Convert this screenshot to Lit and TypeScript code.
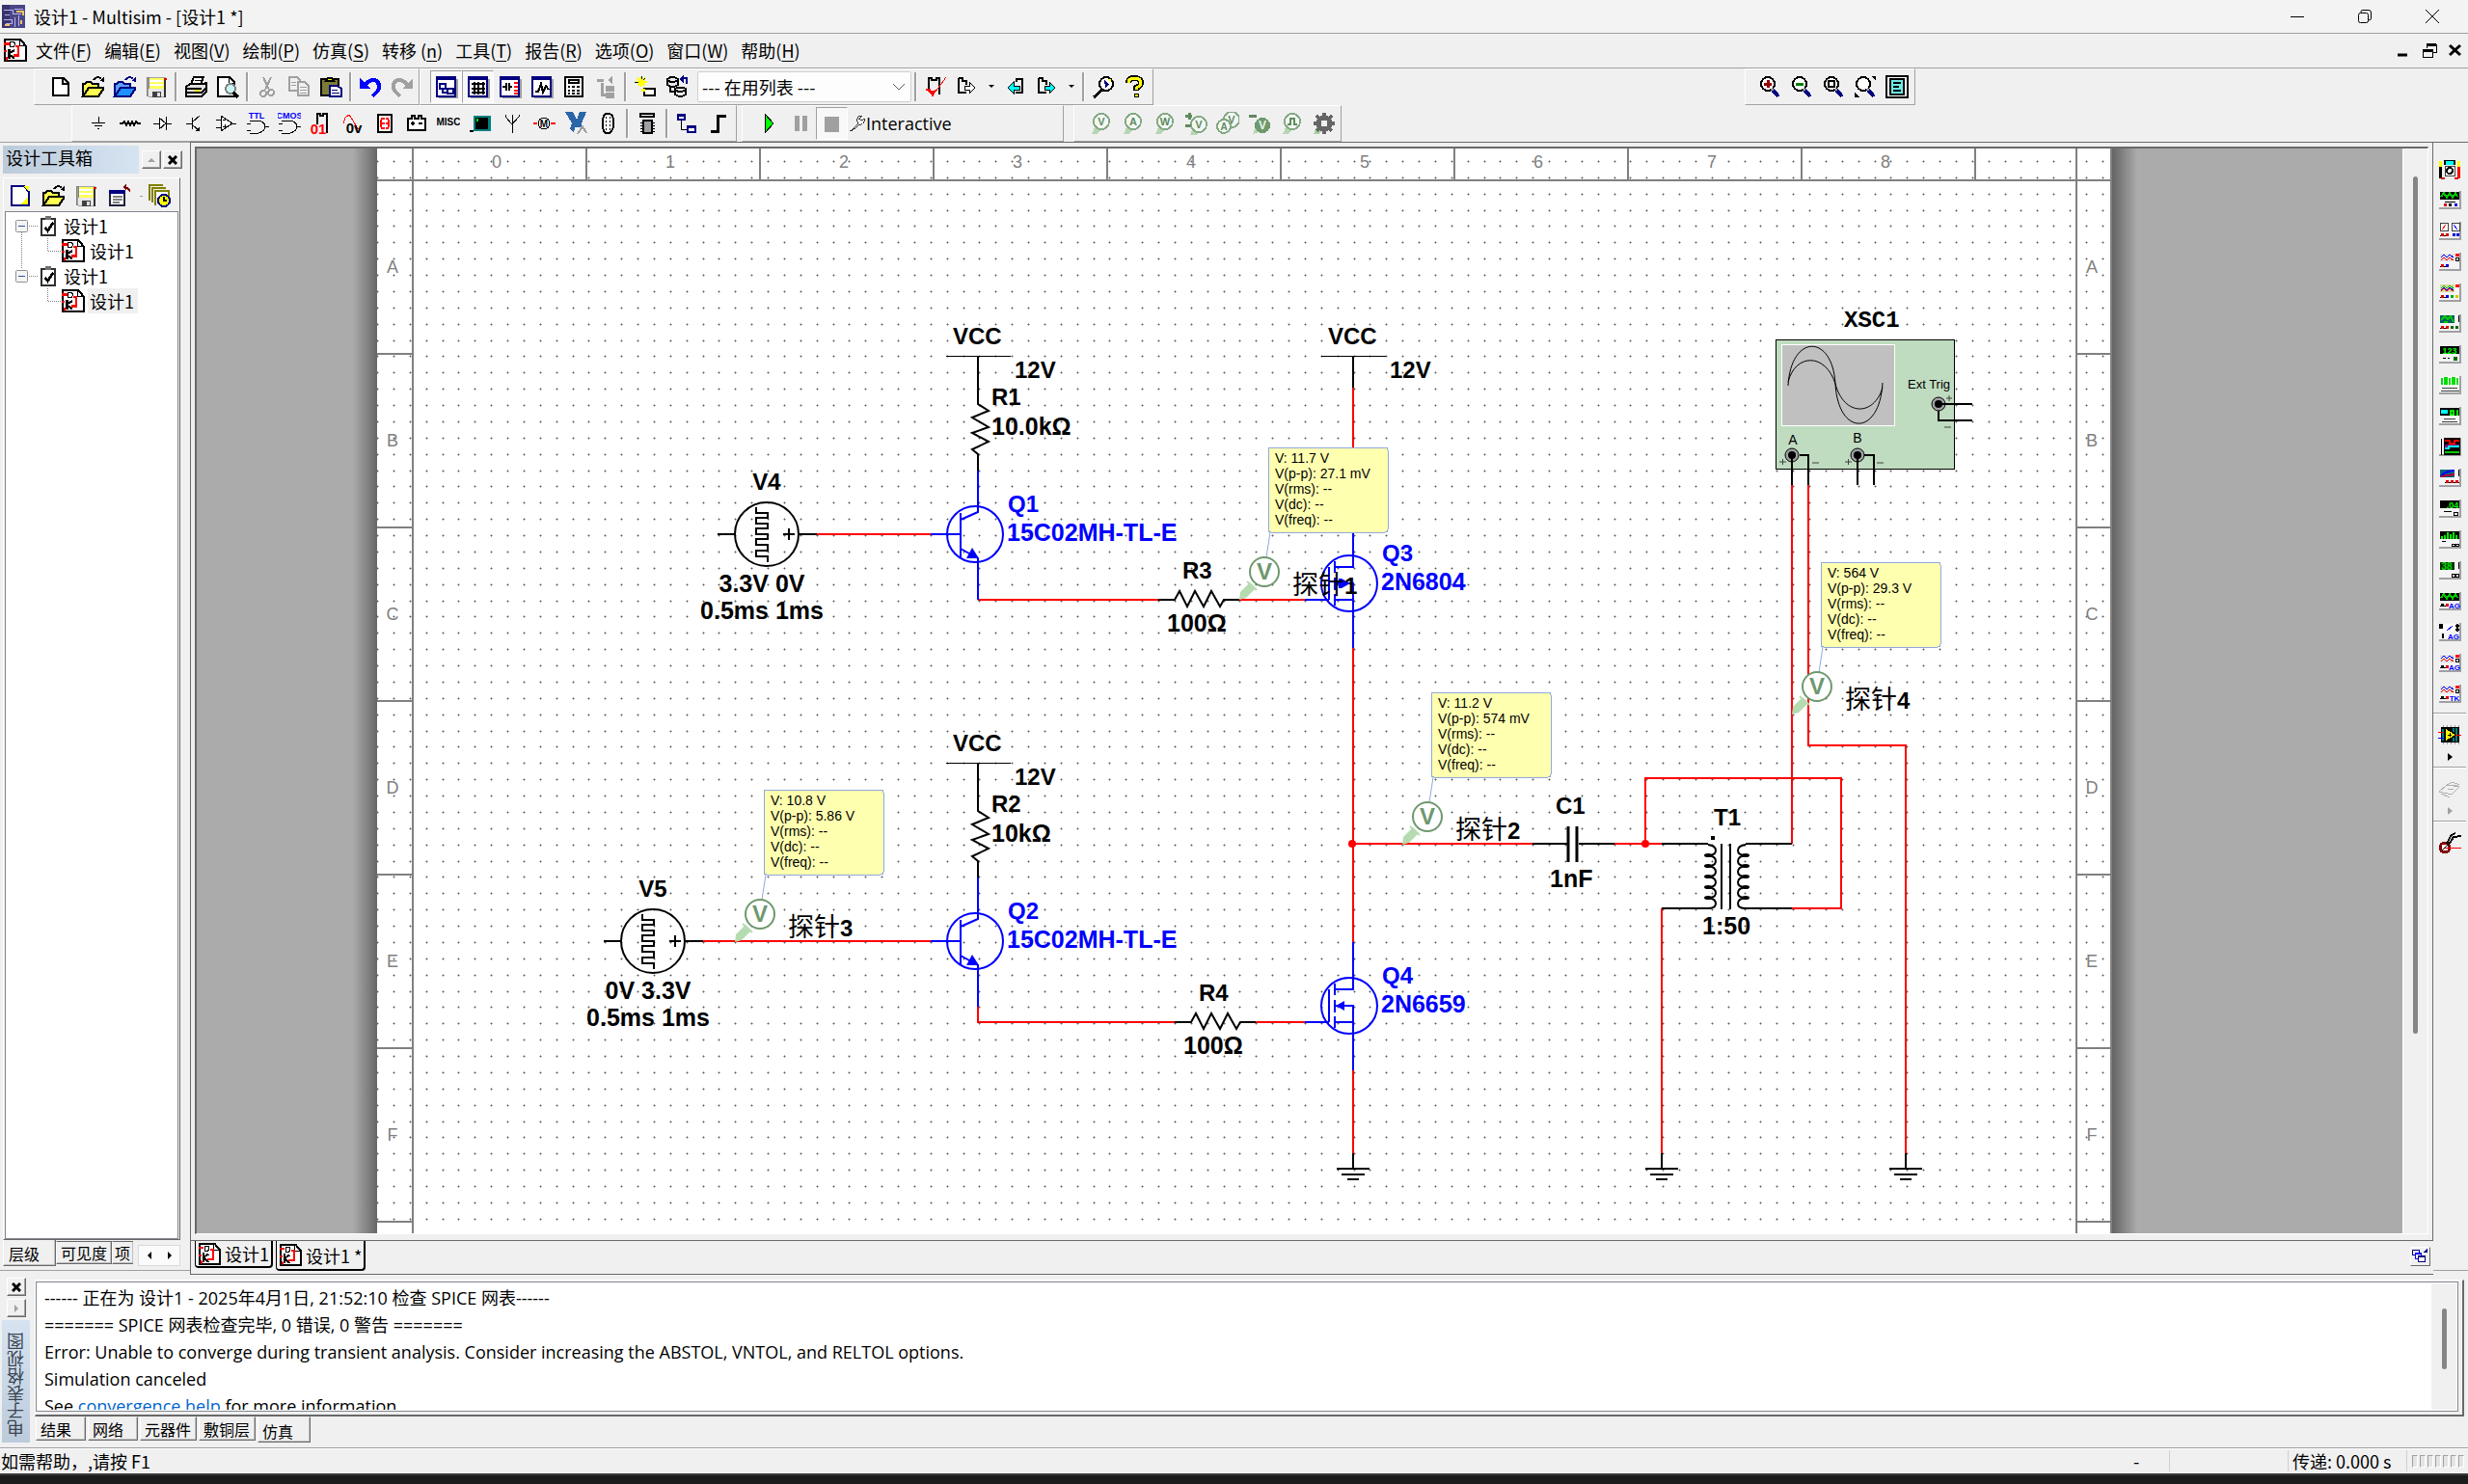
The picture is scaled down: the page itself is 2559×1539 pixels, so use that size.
import { LitElement, html, svg, css, nothing } from "lit";
import type { TemplateResult } from "lit";
import { customElement, property, state } from "lit/decorators.js";
import { classMap } from "lit/directives/class-map.js";

const NAVY = "#000080";
const s = (d: string, stroke = "#000", w = 2, fill = "none") =>
  svg`<path d=${d} stroke=${stroke} stroke-width=${w} fill=${fill}></path>`;
const f = (d: string, fill = "#000") => svg`<path d=${d} fill=${fill}></path>`;
const t = (x: number, y: number, str: string, fill = "#000", size = 10) =>
  svg`<text x=${x} y=${y} fill=${fill} font-size=${size} font-weight="700" text-anchor="middle" font-family="Liberation Sans, sans-serif">${str}</text>`;

/* magnifier lens shared by the zoom commands */
const lens = (inner: unknown) => svg`
  <circle cx="10" cy="9" r="7" fill="#fff" stroke="#000" stroke-width="2"></circle>
  ${s("M15 15L21 22", NAVY, 4)}${s("M14 14L16 16", "#a0a0a4", 2)}${inner}`;

/* probe badge shared by the probe commands */
const probe = (ch: string, x = 13, y = 10) => svg`
  ${f(`M${x - 10} ${y + 13}L${x - 6} ${y + 4}L${x} ${y + 8}L${x - 4} ${y + 13}Z`, "#b5d6b0")}
  <circle cx=${x} cy=${y} r="8" fill="#f4f8f4" stroke="#84a984" stroke-width="2"></circle>
  ${t(x, y + 4, ch, "#5f8a5f", 11)}`;

const windowIcon = (inner: unknown) => svg`
  ${f("M4 4H24V24H4Z", "#a0a0a4")}${s("M2 2H21V22H2Z", NAVY, 2, "#fff")}${f("M1 1H22V5H1Z", NAVY)}${inner}`;

const floppy = svg`${f("M2 2H22V23H4L2 21Z", "#a0a0a4")}${f("M4 3H20V14H4Z", "#ffff60")}${s("M2 2H4V21H2Z", "#808080", 1)}
  ${f("M20 3H22V23H20Z", "#303030")}${f("M4 14H20V22H4Z", "#e8e8e8")}${f("M8 17H17V23H8Z", "#404040")}${f("M13 18H16V22H13Z", "#e0e0e0")}${f("M20 3H23V5H20Z", "#d00")}
  ${s("M5 6H19M5 10H19", "#fff", 2)}`;
const folder = (a: string, b: string, line: string, arrow: string) => svg`
  ${s("M2 22V9H4L6 7H10L12 9H18V13", line, 2, a)}${s("M2 22L8 13H24L18 22Z", line, 2, b)}
  ${s("M13 5Q17 0 21 4", arrow, 2)}${f("M19 6L24 7V1Z", arrow)}`;

const ICONS: Record<string, unknown> = {
  app: svg`${f("M0 0H24V24H0Z", "#4a4688")}${f("M0 0H8V24H0Z", "#37346e")}${s("M2 5H11V9H20M3 10H8M2 15H10V19H4M13 13V23M17 11V22M13 4H22", "#b9b6e6", 1)}${s("M15 7H22V11M3 21H8M20 16V20", "#f0c26a", 2)}`,
  doc: svg`${s("M2 2H17L22 8V22H2Z", "#000", 2, "#fff")}${s("M16 2V8H22", "#000", 1)}${s("M1 6H6M1 13H4M12 8H15V17H10", "#f00", 2)}
    ${s("M7 4H10Q13 6 10 9H7Z", "#000", 1)}${s("M6 11V20M6 15L11 12M6 16L11 20", "#000", 2)}${f("M3 18L6 20L3 22Z", "#f00")}`,
  new: s("M4 3H15L20 8V21H4ZM14 3V9H20", "#000", 2, "#fff"),
  newDoc: svg`${s("M3 2H16L21 8V22H3Z", NAVY, 2, "#fff")}${f("M15 2L21 8V2H17Z", "#ff0")}${f("M20 14V21H12Z", "#ff0")}`,
  open: folder("#ffff50", "#ffff50", "#000", "#000"),
  openBlue: folder("#5aa0ff", "#1e90ff", NAVY, NAVY),
  save: floppy,
  print: svg`${s("M7 9L10 2H20L17 9", "#000", 2, "#fff")}${s("M11 5H17M10 8H15", "#000", 1)}${s("M2 12L6 9H20L23 8V17L18 22H2Z", "#000", 2, "#e0e0e0")}${s("M2 14H18M2 18H18L23 13", "#000", 2)}${f("M11 15H16V17H11Z", "#ff0")}`,
  preview: svg`${s("M2 2H14L19 7V22H2Z", "#000", 2, "#fff")}${s("M13 2V8H19", "#000", 1)}<circle cx="15" cy="14" r="5" fill="#c8f4f4" stroke="#808080" stroke-width="2"></circle>${s("M18 18L23 23", "#000", 3)}`,
  cut: svg`${s("M8 2L14 15M16 2L10 15", "#a0a0a0", 2)}<circle cx="8" cy="19" r="3" fill="none" stroke="#a0a0a0" stroke-width="2"></circle><circle cx="16" cy="18" r="3" fill="none" stroke="#a0a0a0" stroke-width="2"></circle>`,
  copy: svg`${s("M2 2H10L13 5V16H2Z", "#a0a0a0", 2)}${s("M4 7H9M4 10H9", "#a0a0a0", 1)}${s("M11 7H18L22 11V21H11Z", "#a0a0a0", 2, "#f0f0f0")}${s("M13 12H20M13 15H20M13 18H20", "#a0a0a0", 1)}`,
  paste: svg`${s("M2 4H20V21H2Z", "#000", 2, "#7b7b36")}${s("M7 6H15L13 3H9Z", "#000", 2, "#ff0")}${s("M11 11H19L23 14V22H11Z", NAVY, 2, "#fff")}${s("M13 15H19M13 18H21", NAVY, 1)}`,
  undo: svg`${s("M5 12Q10 4 17 5Q23 8 20 16L14 22", "#00f", 4)}${f("M1 3V14H12Z", "#00f")}`,
  redo: svg`${s("M19 12Q14 4 7 5Q1 8 4 16L10 22", "#a0a0a0", 4)}${f("M23 3V14H12Z", "#a0a0a0")}`,
  hier: windowIcon(s("M5 9H11V14H5ZM8 14V18H13M13 14H19V19H13Z", NAVY, 2)),
  grid: windowIcon(svg`${f("M5 7H19V20H5Z", "#fff")}${s("M5 9H19M5 14H19M5 18H19M8 7V20M12 7V20M17 7V20", "#000", 2)}`),
  netw: windowIcon(svg`${s("M4 12H8M8 8V16M11 8V16M11 12H14", "#000", 2)}${s("M16 8H20M16 12H20M16 16H20M16 19H20", "#f00", 2)}`),
  graph: windowIcon(s("M5 17H8L11 9L13 18L16 11L19 15", "#000", 2)),
  calc: svg`${s("M3 2H21V22H3Z", "#000", 2, "#fff")}${s("M7 5H17V8H7Z", "#000", 2)}${s("M6 12H18M6 16H18M6 19H18", "#000", 2)}${s("M9 10V21M14 10V21", "#fff", 2)}`,
  treeOff: svg`${s("M3 5H10M8 8V20H13M12 12H21M12 15H21M12 19H21M12 22H21", "#a0a0a0", 3)}${f("M14 5L19 1V9Z", "#a0a0a0")}`,
  wizard: svg`${s("M2 7H14M8 1V12M4 3L12 11M12 3L4 11", "#ff0", 2)}${s("M1 7H5M8 1V4M12 3L10 5", "#000", 1)}${s("M11 14H22V21H11Z", "#000", 2, "#fff")}${f("M8 14H12V17H8Z", "#ff0")}`,
  db: svg`${s("M2 4Q7 0 13 4V10Q7 14 2 10Z", "#000", 2, "#e8e8e8")}${s("M2 5Q7 9 13 5M10 14Q15 11 21 14V20Q16 24 10 20ZM10 15Q15 19 21 15M5 12V17H10", "#000", 2)}${s("M22 9V3H17", NAVY, 2)}${f("M14 4L19 0V8Z", NAVY)}`,
  check: svg`${s("M5 15V3H8V5H13V3H16V20", "#000", 2)}${s("M3 14L9 21L23 2", "#f00", 1)}${s("M2 15H6L9 20L12 15", "#f00", 2)}${f("M5 16H12L9 23Z", "#f00")}`,
  xfer: svg`${s("M3 3V18H11M3 3H7V6H11V10", "#000", 2)}${s("M9 11H14V7L20 13L14 19V15H9Z", "#000", 1, "#fff")}`,
  xferIn: svg`${s("M13 7V4H19V18H12", "#000", 2)}${s("M16 11H10V7L4 13L10 19V15H16Z", "#000", 1, "#0ff")}`,
  xferOut: svg`${s("M3 3V18H11M3 3H7V6H11V10", "#000", 2)}${s("M9 11H14V7L20 13L14 19V15H9Z", "#000", 1, "#0ff")}`,
  find: svg`<circle cx="15" cy="9" r="7" fill="#fff" stroke="#000" stroke-width="2"></circle>${s("M11 15L2 23", "#000", 3)}${f("M13 5L18 9L14 13Z", "#007")}${f("M16 4H20V8Z", "#ff0")}`,
  help: svg`${s("M5 8Q5 3 11 3Q18 3 18 8Q18 11 13 13V16", "#000", 6)}${s("M5 8Q5 3 11 3Q18 3 18 8Q18 11 13 13V15", "#ff0", 3)}${s("M11 19H15V22H11Z", "#000", 1, "#ff0")}`,
  zin: lens(s("M10 5V13M6 9H14", "#900", 3)),
  zout: lens(s("M6 9H14", "#008000", 3)),
  zarea: lens(s("M7 6H13V12H7Z", "#000", 2)),
  zfit: svg`${lens(nothing)}${f("M18 1H23V6ZM1 18V23H6Z")}`,
  full: svg`${s("M1 1H23V23H1Z", "#000", 2, "#fff")}${s("M5 4H19V20H5Z", "#000", 2, "#70e8e8")}${s("M8 8H16M8 12H14M8 16H16", "#000", 2)}`,
  gnd: s("M12 5V11M5 11H19M8 14H16M11 17H13", "#000", 1),
  res: s("M1 12H4L6 10L8 14L10 10L12 14L14 10L16 14L18 10L20 12H23", "#000", 2),
  diode: s("M3 12H9M9 6V18L16 12ZM16 5V19M16 12H22", "#000", 1, "#fff"),
  bjt: svg`${s("M4 12H10M10 6V18M10 11L18 4M10 13L18 20", "#000", 1)}${f("M18 20V15L13 20Z")}`,
  opamp: svg`${s("M7 4V20L19 12Z", "#000", 1, "#fff")}${s("M2 8H7M2 16H7M19 12H23M9 8H12M9 15H13M11 13V17", "#000", 1)}`,
  ttl: svg`${t(11, 7, "TTL", "#00f", 9)}${s("M4 9H13Q20 11 20 15Q20 20 13 22H4M1 12H5M1 19H5M20 15H24", "#000", 1)}`,
  cmos: svg`${t(12, 7, "CMOS", "#00f", 9)}${s("M4 9H13Q20 11 20 15Q20 20 13 22H4M1 12H5M1 19H5M20 15H24", "#000", 1)}`,
  dig: svg`${s("M8 13V2H11V4H14V2H18V22", "#000", 2)}${t(9, 23, "01", "#f00", 15)}`,
  mixed: svg`${s("M2 12L4 6L8 3L12 9L17 18L21 14", "#f00", 1)}${t(13, 22, "0v", "#000", 15)}`,
  ind: svg`${s("M5 3H19V21H5Z", "#000", 2, "#fff")}${s("M8 7H16M8 12H16M8 17H16M8 8V16M16 8V16", "#f00", 2)}${s("M12 5V20", "#fff", 1)}`,
  pwr: svg`${s("M3 7H7V4H10V7H14V4H17V7H21V19H3Z", "#000", 2, "#fff")}${s("M6 12H10M8 10V14M14 12H18", "#000", 2)}`,
  misc: t(12, 14, "MISC", "#000", 10),
  adv: svg`${f("M5 4H23V20H5Z", "#008080")}${f("M7 6H20V18H7Z")}${f("M8 7H10V10H8Z", "#0f0")}${s("M1 20H5", "#000", 2)}`,
  rf: s("M12 22V5M12 13L5 5V3M12 13L19 5V3M12 10V3", "#000", 1),
  motor: svg`<circle cx="12" cy="12" r="6" fill="#fff" stroke="#000" stroke-width="1"></circle>${t(12, 16, "M", "#000", 10)}${s("M1 12H5M19 12H24", "#f00", 2)}`,
  ni: svg`${f("M1 0H9L13 8L16 0H23L18 12L19 16H11L10 22L6 17L8 12Z", "#2a66a8")}${s("M14 23L19 15L23 22", "#a0a0a0", 2)}`,
  conn: svg`${s("M9 3Q12 0 16 3Q18 5 18 12Q18 19 15 21Q12 24 9 21Q7 19 7 12Q7 5 9 3Z", "#000", 2, "#fff")}${s("M10 6H11M14 6H15M10 10H11M14 10H15M10 14H11M14 14H15M10 18H11M14 18H15", "#000", 2)}`,
  mcu: svg`${f("M4 1H20V6H4Z")}${s("M6 3H18", "#fff", 1)}${s("M8 9H17V22H8Z", "#000", 2, "#a0a0a4")}${s("M5 11H8M5 14H8M5 17H8M5 20H8M17 11H20M17 14H20M17 17H20M17 20H20", "#000", 1)}`,
  hblock: svg`${s("M3 3H10V8H3ZM13 15H21V21H13Z", NAVY, 2, "#fff")}${f("M2 2H11V5H2ZM12 14H22V17H12Z", NAVY)}${s("M6 9V18H12", "#000", 1)}`,
  bus: s("M4 20H11V4H20", "#000", 3),
  play: s("M8 2V22L17 12Z", "#000", 1, "#0f0"),
  pause: f("M6 4H11V20H6ZM14 4H19V20H14Z", "#a0a0a0"),
  stop: f("M4 5H19V21H4Z", "#a0a0a0"),
  wrench: s("M3 22L13 12Q11 6 15 3L18 3L15 7L18 9L22 6Q23 12 17 14L15 14L5 23Z", "#000", 1, "#fff"),
  pV: probe("V"), pA: probe("A"), pW: probe("W"),
  pVV: svg`${probe("V", 15, 13)}${s("M1 4H8M5 1V8M1 14H7", "#5f8a5f", 3)}`,
  pAV: svg`${probe("V", 16, 8)}<circle cx="8" cy="15" r="7" fill="#f4f8f4" stroke="#84a984" stroke-width="2"></circle>${t(8, 19, "A", "#5f8a5f", 10)}`,
  pRef: svg`${f("M5 23L9 12L15 20Z", "#b5d6b0")}<circle cx="15" cy="14" r="8" fill="#6e986e"></circle>${t(15, 18, "V", "#e8f4e8", 12)}${s("M1 4H9", "#5f8a5f", 3)}`,
  pDig: svg`${probe("")}${s("M8 13H11V7H15V13H18", "#5f8a5f", 2)}`,
  gear: svg`${f("M2 23L5 16L10 21L7 23Z", "#a9cfa4")}<circle cx="13" cy="12" r="6" fill="none" stroke="#666" stroke-width="5"></circle>${s("M13 1V5M13 19V23M2 12H6M20 12H24M5 4L8 7M18 17L21 20M21 4L18 7M5 20L8 17", "#666", 4)}`,
  report: svg`${s("M3 7H18V22H3Z", "#202040", 2, "#fff")}${f("M2 6H19V10H2Z", NAVY)}${s("M6 13H16M6 16H16M6 19H13", "#808080", 2)}${s("M24 8Q22 3 18 3", "#800000", 2)}${f("M16 3L20 0V7Z", "#800000")}`,
  history: svg`${s("M2 17V1H16M5 19V4H19M8 22V7H22V13", "#808000", 2)}${f("M9 8H21V14H9Z", "#fff")}<circle cx="17" cy="17" r="6" fill="#ff0" stroke=${NAVY} stroke-width="2"></circle>${s("M17 13V17H20", "#000", 2)}`,
  clip: svg`${s("M4 4H19V22H4Z", "#303030", 2, "#fff")}${f("M8 1H15V5H8Z", "#707070")}${s("M8 13L11 17L17 8", "#000", 3)}`,
  cascade: svg`${s("M2 3H11V10H2Z", NAVY, 2)}${s("M6 8H14V15H6Z", "#00f", 2, "#f0f0f0")}${s("M10 12H19V19H10Z", NAVY, 2, "#fff")}${f("M16 7L22 1V7Z", NAVY)}`,
  niInst: svg`${s("M5 2V22M9 2V22M13 2V22M17 2V22M21 2V22", "#a0a0a4", 1)}${f("M3 4H22V20H3Z")}${s("M5 6V18M19 5V19M16 5V9M16 15V19", "#008080", 2)}${f("M8 6L18 12L8 18Z", "#ff0")}${s("M10 12H14M12 10V14", "#000", 1)}${s("M0 9H6M18 12H24", "#f00", 1)}${s("M0 15H6", "#00f", 1)}`,
  lvInst: s("M1 15L9 8L22 10L14 18ZM9 8L15 5L22 8M3 17L12 21M10 12H16M14 8H20", "#b0b0b0", 1),
  clamp: svg`<circle cx="7" cy="17" r="5" fill="#fff" stroke="#800000" stroke-width="3"></circle>${s("M9 13L14 3M11 14L16 6L24 5M14 4L18 2", "#000", 2)}${s("M6 17H24", "#f00", 1)}${s("M4 20L10 14", "#000", 1)}`,
};

/* instrument faces: body panel + screen + terminals */
const body = (inner: unknown) => svg`${f("M1 2H24V21H1Z", "#a0a0a4")}${f("M1 2H22V19H1Z", "#f4f4f4")}${inner}`;
const jack = (a: string, b: string) => svg`${s("M2 16H8", "#000", 1)}${f("M3 14H6V17H3Z", a)}${f("M8 14H11V17H8Z", b)}`;
const screen = (fill: string, inner: unknown, w = 20) => svg`${f(`M2 3H${w}V11H2Z`, fill)}${inner}`;
const wave = (c1: string, c2: string) => svg`${s("M3 7L6 4L9 7L12 4L16 7", c1, 1)}${s("M3 10L6 7L9 10L12 7L16 10", c2, 1)}`;
const INSTR: [string, unknown][] = [
  ["万用表", svg`${f("M1 3H4V21H1Z")}${f("M1 3H4V9H1ZM20 3H23V9H20Z", "#ff0")}${f("M20 9H23V21H20Z", "#f00")}${f("M6 2H18V7H6Z")}${f("M8 3H16V7H8Z", "#0ff")}${s("M7 8H17V18H7Z", "#404040", 1, "#fff")}<circle cx="12" cy="13" r="3" fill="none" stroke="#000" stroke-width="2"></circle>${s("M3 21H7M17 21H21", "#d00", 2)}`],
  ["函数发生器", body(svg`${screen("#000", s("M3 8L6 4L9 9L12 4L15 9L18 4L20 8", "#0c0", 2), 22)}${s("M7 13H18", "#000", 1)}${f("M6 15H9V18H6Z", "#d00")}${f("M11 15H14V18H11Z")}${f("M17 15H20V18H17Z", "#00d")}`)],
  ["瓦特计", body(svg`${s("M2 3H10V11H2ZM14 3H22V11H14Z", "#404040", 1, "#fff")}${s("M4 10L8 5", "#f00", 1)}${s("M16 5L20 10", "#00f", 1)}${jack("#d00", "#d00")}${f("M15 14H18V17H15ZM19 14H22V17H19Z", "#00d")}`)],
  ["示波器", body(svg`${screen("#e0e0e0", wave("#00f", "#f00"), 17)}${f("M18 3H22V6H18Z", "#f00")}<circle cx="20" cy="9" r="2" fill="#fff" stroke="#000"></circle>${jack("#d00", "#00d")}`)],
  ["四通道示波器", body(svg`${screen("#d8d8a0", wave("#0c0", "#f00"), 17)}${s("M3 9L6 6L9 9L12 6L16 9", "#00f", 1)}${f("M18 3H22V6H18Z", "#f00")}${jack("#d00", "#00d")}${f("M13 14H16V17H13Z", "#0a0")}${f("M18 14H21V17H18Z", "#cc0")}`)],
  ["波特测试仪", body(svg`${screen("#006060", s("M3 8L7 4L10 7L13 4L16 10M6 10H10", "#0c0", 2), 17)}${s("M21 3V10", "#000", 1)}${jack("#d00", "#d00")}${f("M13 14H16V17H13ZM18 14H21V17H18Z", "#060")}`)],
  ["频率计数器", body(svg`${screen("#000", t(12, 11, "123", "#0f0", 9), 22)}${s("M5 15H8M10 15H12", "#000", 1)}${f("M16 14H20V18H16Z", "#060")}`)],
  ["字发生器", body(svg`${screen("#fff", s("M4 4V11M7 4H9V10H7ZM12 4V11M15 4H17V10H15ZM20 4V11", "#0d0", 2), 22)}${s("M4 14H20M3 17H22", "#404040", 1)}`)],
  ["逻辑变换器", body(svg`${screen("#000", svg`${f("M3 5H10V9H3Z", "#0ff")}${s("M13 6H16V10H13ZM20 5V11", "#0f0", 2)}`, 22)}${s("M6 14H18M4 17H20", "#404040", 1)}`)],
  ["逻辑分析仪", body(svg`${f("M6 2H23V20H6Z")}${s("M7 5H12V8H17V5H22", "#f00", 2)}${s("M7 10H22", "#808", 3)}${s("M7 13H11V11H22", "#0ff", 2)}${s("M7 17H22", "#0c0", 2)}${s("M3 3V20", "#000", 1)}`)],
  ["IV 分析仪", body(svg`${screen("#006080", svg`${s("M3 10Q6 5 17 4", "#00f", 2)}${s("M3 10L17 8", "#a03", 2)}`, 17)}${s("M21 3V10", "#000", 1)}${s("M7 16H22", "#000", 1)}${f("M8 14H11V17H8ZM13 14H16V17H13ZM18 14H21V17H18Z", "#d00")}`)],
  ["失真分析仪", body(svg`${screen("#000", t(15, 11, ".04", "#0f0", 9), 22)}${s("M6 14H14", "#000", 1)}${s("M16 15H20V18H16Z", "#000", 1)}`)],
  ["光谱分析仪", body(svg`${screen("#000", s("M4 11V8M7 11V7M10 11V4M13 11V6M16 11V4M19 11V7", "#0f0", 2), 22)}${s("M4 13H8M14 16H17V18H14ZM18 16H21V18H18Z", "#000", 1)}`)],
  ["网络分析仪", body(svg`${screen("#003000", t(9, 11, "38", "#0d0", 10), 17)}${s("M21 3V10M14 15H17V18H14ZM18 15H21V18H18Z", "#000", 1)}`)],
  ["Agilent 函数发生器", body(svg`${screen("#000", s("M3 8L6 4L9 9L12 4L15 9L18 4L20 8", "#0c0", 2), 22)}${jack("#000", "#d00")}${t(17, 19, "AG", "#00f", 8)}`)],
  ["Agilent 万用表", body(svg`${screen("#fff", s("M9 10L15 5", "#00f", 1), 17)}${f("M1 3H5V8H1Z")}${s("M20 3V11M18 5H22M18 9H22", "#000", 2)}${t(16, 19, "AG", "#00f", 8)}${s("M5 13V18", "#000", 2)}`)],
  ["Agilent 示波器", body(svg`${screen("#e0e0e0", wave("#00f", "#f00"), 17)}${f("M18 3H22V6H18Z", "#f00")}<circle cx="20" cy="9" r="2" fill="#fff" stroke="#000"></circle>${jack("#000", "#d00")}${t(17, 19, "AG", "#00f", 8)}`)],
  ["Tektronix 示波器", body(svg`${screen("#e0e0e0", wave("#00f", "#f00"), 17)}${f("M18 3H22V6H18Z", "#f00")}<circle cx="20" cy="9" r="2" fill="#fff" stroke="#000"></circle>${jack("#000", "#d00")}${t(17, 19, "TK", "#00f", 8)}`)],
];

const glyph = (inner: unknown, size = 24) =>
  html`<svg width=${size} height=${size} viewBox="0 0 24 24" shape-rendering="crispEdges" aria-hidden="true">${inner}</svg>`;

const UI_FONT = css`"Noto Sans CJK SC", "Noto Sans", sans-serif`;

@customElement("tool-button")
class ToolButton extends LitElement {
  @property() icon = "";
  @property() label = "";
  @property({ type: Boolean }) pressed = false;
  @property({ type: Boolean }) off = false;
  static styles = css`
    :host { display: block; width: 33px; height: 34px; }
    button { width: 33px; height: 34px; padding: 0; border: 1px solid transparent; background: none; display: grid; place-items: center; }
    .pressed { border-color: #a0a0a0 #fff #fff #a0a0a0; background: #f8f8f8; }
  `;
  render() {
    return html`<button class=${classMap({ pressed: this.pressed })} aria-label=${this.label} ?disabled=${this.off}>
      ${glyph(ICONS[this.icon])}
    </button>`;
  }
}

/* dot grid: eight steps fill 135 px, so each dot lands on a whole pixel */
const GX = [0, 17, 33, 50, 67, 84, 101, 118];
const GY = [0, 17, 34, 51, 67, 84, 101, 118];
const GRID_ARMS = GY.flatMap((y) => GX.map((x) => `M${x} ${y + 1}h3v1h-3zM${x + 1} ${y}h1v3h-1z`)).join("");
const GRID_CORE = GY.flatMap((y) => GX.map((x) => `M${x + 1} ${y + 1}h1v1h-1z`)).join("");

interface Probe { x: number; y: number; name: string; v: string; pp: string }
const PROBES: Probe[] = [
  { x: 1285, y: 622, name: "1", v: "11.7 V", pp: "27.1 mV" },
  { x: 1454, y: 876, name: "2", v: "11.2 V", pp: "574 mV" },
  { x: 762, y: 977, name: "3", v: "10.8 V", pp: "5.86 V" },
  { x: 1858, y: 741, name: "4", v: "564 V", pp: "29.3 V" },
];

@customElement("schematic-sheet")
class SchematicSheet extends LitElement {
  static styles = css`
    :host { display: block; flex: none; }
    svg { display: block; }
    .label { font: 700 24px "Liberation Sans", Arial, sans-serif; }
    .value { font: 700 25px "Liberation Sans", Arial, sans-serif; }
    .mono { font: 700 24px "Liberation Mono", "Courier New", monospace; }
    .cjk { font: 400 27px "Noto Sans CJK SC", sans-serif; }
    .small { font: 400 14px "Liberation Sans", Arial, sans-serif; }
    .tiny { font: 400 13px "Liberation Sans", Arial, sans-serif; }
    .ruler { font: 400 18px "Liberation Sans", Arial, sans-serif; fill: #808080; text-anchor: middle; }
    .mid { text-anchor: middle; }
    .blue { fill: #00f; }
    .green { fill: #6e986e; }
    .wire { stroke: #f00; stroke-width: 2; fill: none; }
    .ink { stroke: #000; stroke-width: 2; fill: none; }
    .part { stroke: #00f; stroke-width: 2; fill: none; }
    .frame { stroke: #808080; stroke-width: 2; fill: none; }
    .hair { stroke: #000; stroke-width: 1; fill: none; shape-rendering: crispEdges; }
  `;

  private supply(dx: number, dy: number) {
    return svg`<g transform="translate(${dx} ${dy})">
      <text class="label" x="988" y="357">VCC</text>
      <text class="label" x="1052" y="392">12V</text>
      <path class="hair" d="M981 369H1048"></path>
      <path class="ink" d="M1014 369V402"></path>
    </g>`;
  }
  private npn(dy: number, res: string, ohms: string, ref: string) {
    return svg`<g transform="translate(0 ${dy})">
      <path class="ink" d="M1014 402V419L1025 426L1008 433L1025 443L1008 449L1025 458L1008 466L1014 471V488"></path>
      <text class="label" x="1028" y="420">${res}</text>
      <text class="value" x="1028" y="451">${ohms}</text>
      <path class="part" d="M1014 488V531L996 539M965 554H996M996 532V579M996 569L1014 579V622"></path>
      <circle class="part" cx="1011" cy="554" r="29"></circle>
      <path class="blue" d="M1008 568L1015 579H1002Z"></path>
      <text class="label blue" x="1045" y="531">${ref}</text>
      <text class="value blue" x="1044" y="561">15C02MH-TL-E</text>
    </g>`;
  }
  private source(dx: number, dy: number, ref: string, levels: string) {
    return svg`<g transform="translate(${dx} ${dy})">
      <circle class="ink" cx="795" cy="554" r="33"></circle>
      <path class="ink" d="M744 554H762M828 554H847M812 554H824M818 548V560"></path>
      <path class="ink" d="M784 526V532H796V537H784V543H796V548H784V554H796V559H784V565H796V571H784V577H796V583"></path>
      <text class="label mid" x="795" y="508">${ref}</text>
      <text class="value mid" x="790" y="614">${levels}</text>
      <text class="value mid" x="790" y="642">0.5ms 1ms</text>
    </g>`;
  }
  private resistor(dx: number, dy: number, ref: string) {
    return svg`<g transform="translate(${dx} ${dy})">
      <path class="ink" d="M1201 622H1218L1223 613L1231 629L1239 613L1248 629L1256 613L1265 629L1269 622H1285"></path>
      <text class="label" x="1226" y="600">${ref}</text>
      <text class="value" x="1210" y="655">100Ω</text>
    </g>`;
  }
  private mosfet(dy: number, ref: string, part: string, arrow: string) {
    return svg`<g transform="translate(0 ${dy})">
      <circle class="part" cx="1399" cy="605" r="29"></circle>
      <path class="part" d="M1403 539V588H1384M1384 582V594M1384 599V612M1384 616V628M1378 588V622M1353 622H1378M1384 622H1403M1384 605H1403V672"></path>
      <path class="blue" d=${arrow}></path>
      <text class="label blue" x="1433" y="582">${ref}</text>
      <text class="value blue" x="1432" y="612">${part}</text>
    </g>`;
  }
  private ground(x: number) {
    return svg`<path class="ink" d="M${x} 1196V1212M${x - 17} 1212H${x + 17}M${x - 12} 1218H${x + 12}M${x - 6} 1223H${x + 6}"></path>`;
  }
  private probe(p: Probe) {
    const lines = [`V: ${p.v}`, `V(p-p): ${p.pp}`, "V(rms): --", "V(dc): --", "V(freq): --"];
    return svg`<g transform="translate(${p.x} ${p.y})">
      <path d="M32 -70L28 -44" stroke="#8fa9dd" stroke-width="1"></path>
      <path d="M0 0L1 -8L11 -18L17 -12L7 -2Z" fill="#b5dbb0"></path>
      <path d="M8 -19L18 -10" stroke="#b5dbb0" stroke-width="2"></path>
      <circle cx="26" cy="-29" r="15" fill="#fff" stroke="#6e986e" stroke-width="2"></circle>
      <text class="label mid green" x="26" y="-21">V</text>
      <rect x="30" y="-158" width="124" height="88" rx="3" fill="#ffffb0" stroke="#8fa9dd" shape-rendering="crispEdges"></rect>
      ${lines.map((l, i) => svg`<text class="small" x="37" y=${-142 + i * 16}>${l}</text>`)}
      <text x="55" y="-6"><tspan class="cjk">探针</tspan><tspan class="label">${p.name}</tspan></text>
    </g>`;
  }
  private coil(x: number, dir: number) {
    const step = 11;
    const humps = [0, 1, 2, 3, 4, 5].map((i) => `M${x} ${876 + i * step}q${8 * dir} 1 ${8 * dir} 6q0 5 ${-8 * dir} 5`).join("");
    return svg`<path class="ink" d=${humps}></path>
      ${[1, 2, 3, 4, 5].map((i) => svg`<ellipse cx=${x} cy=${876 + i * step} rx="4" ry="2"></ellipse>`)}`;
  }
  private scope() {
    const jackAt = (x: number, y: number) => svg`<circle cx=${x} cy=${y} r="7" fill="#a0a0a4" stroke="#000"></circle><circle cx=${x} cy=${y} r="4"></circle>`;
    return svg`
      <text class="mono" x="1912" y="339">XSC1</text>
      <rect x="1841" y="352" width="185" height="134" fill="#c0dcc0" stroke="#000" shape-rendering="crispEdges"></rect>
      <rect x="1847" y="357" width="117" height="84" fill="#c0c0c0" stroke="#fff" shape-rendering="crispEdges"></rect>
      <path fill="none" stroke="#000" d="M1854 400C1857 346 1900 346 1903 398C1906 453 1949 453 1952 397M1854 396C1862 366 1893 366 1903 398C1912 432 1943 432 1952 402"></path>
      ${jackAt(1858, 472)}${jackAt(1926, 472)}${jackAt(2010, 419)}
      <path class="ink" d="M1858 472V503M1866 472H1875V503M1926 472V503M1933 472H1943V503M2010 419H2045M2010 426V436H2045"></path>
      <path d="M1845 479H1852M1848.5 476V482M1913 479H1920M1916.5 476V482M2018 413H2024M2021 410V416M1879 480H1886M1946 480H1953M2016 443H2023" stroke="#404040"></path>
      <text class="small mid" x="1859" y="461">A</text><text class="small mid" x="1926" y="459">B</text>
      <text class="tiny" x="1978" y="403">Ext Trig</text>`;
  }

  render() {
    const cols = [0, 1, 2, 3, 4, 5, 6, 7, 8];
    const rows = ["A", "B", "C", "D", "E", "F"];
    return html`<svg width="2287" height="1125" viewBox="204 154 2287 1125" role="img" aria-label="设计1">
      <defs>
        <pattern id="dots" x="1791" y="301" width="135" height="135" patternUnits="userSpaceOnUse">
          <path d=${GRID_ARMS} fill="#b0b0b0"></path><path d=${GRID_CORE} fill="#606060"></path>
        </pattern>
        <linearGradient id="shadeL"><stop offset="0" stop-color="#ababab"></stop><stop offset="1" stop-color="#646464"></stop></linearGradient>
        <linearGradient id="shadeR"><stop offset="0" stop-color="#646464"></stop><stop offset="1" stop-color="#ababab"></stop></linearGradient>
      </defs>
      <rect x="204" y="154" width="2287" height="1125" fill="#ababab"></rect>
      <rect x="366" y="154" width="26" height="1125" fill="url(#shadeL)"></rect>
      <rect x="2190" y="154" width="26" height="1125" fill="url(#shadeR)"></rect>
      <rect x="391" y="154" width="1799" height="1125" fill="#fff"></rect>
      <rect x="391" y="165" width="1797" height="1114" fill="url(#dots)" shape-rendering="crispEdges"></rect>
      <path class="frame" d="M391 187H2189M428 154V1279M2153 154V1279M2189 154V1279"></path>
      ${cols.map((c) => svg`<path class="frame" d="M${608 + c * 180} 154V187"></path><text class="ruler" x=${515 + c * 180} y="174">${c}</text>`)}
      ${rows.map((r, i) => svg`<path class="frame" d="M391 ${367 + i * 180}H428M2153 ${367 + i * 180}H2189"></path>
        <text class="ruler" x="407" y=${283 + i * 180}>${r}</text><text class="ruler" x="2169" y=${283 + i * 180}>${r}</text>`)}

      <path class="wire" d="M847 554H965M1014 622H1201M1285 622H1353M1403 402V539M1403 672V977M1403 1110V1196
        M728 976H965M1014 1044V1060H1218M1302 1060H1353M1403 875H1589M1674 875H1723
        M1706 875V807H1909V942H1858M1858 503V875M1875 503V773H1976V1196M1723 942V1196"></path>
      <circle cx="1402" cy="875" r="4" fill="#f00"></circle><circle cx="1706" cy="875" r="4" fill="#f00"></circle>

      ${this.supply(0, 0)}${this.supply(389, 0)}${this.supply(0, 422)}
      ${this.npn(0, "R1", "10.0kΩ", "Q1")}${this.npn(422, "R2", "10kΩ", "Q2")}
      ${this.source(0, 0, "V4", "3.3V 0V")}${this.source(-118, 422, "V5", "0V 3.3V")}
      ${this.resistor(0, 0, "R3")}${this.resistor(17, 438, "R4")}
      ${this.mosfet(0, "Q3", "2N6804", "M1388 600V610H1391L1400 605L1391 600Z")}
      ${this.mosfet(438, "Q4", "2N6659", "M1385 605L1394 600V610Z")}
      ${this.ground(1403)}${this.ground(1723)}${this.ground(1976)}

      <path class="ink" d="M1589 875H1625M1637 875H1674M1723 875H1771M1723 942H1771M1810 875H1858M1810 942H1858M1785 875V943M1794 875V943"></path>
      <path d="M1626 857V894M1635 857V894" stroke="#000" stroke-width="3"></path>
      <rect x="1774" y="867" width="4" height="4"></rect>
      ${this.coil(1771, 1)}${this.coil(1810, -1)}
      <text class="label" x="1613" y="844">C1</text><text class="value" x="1607" y="920">1nF</text>
      <text class="label" x="1777" y="856">T1</text><text class="value" x="1765" y="969">1:50</text>

      ${this.scope()}
      ${PROBES.map((p) => this.probe(p))}
    </svg>`;
  }
}

type Item = string | [string, string, ("pressed" | "off")?];
const FILE_BAR: Item[] = [["new", "新建"], ["open", "打开"], ["openBlue", "打开样本"], ["save", "保存"], "|", ["print", "打印"], ["preview", "打印预览"], "|",
  ["cut", "剪切", "off"], ["copy", "复制", "off"], ["paste", "粘贴"], "|", ["undo", "撤消"], ["redo", "重做", "off"]];
const VIEW_BAR: Item[] = [["hier", "设计工具箱", "pressed"], ["grid", "电子表格视图", "pressed"], ["netw", "SPICE 网表查看器"], ["graph", "图示仪"], ["calc", "后处理器"], ["treeOff", "母电路图", "off"], "|", ["wizard", "元器件向导"], ["db", "数据库管理器"]];
const AFTER_BAR: Item[] = ["|", ["check", "电器法则查验"], ["xfer", "转移到 Ultiboard"], "v", ["xferIn", "从文件反向注解"], ["xferOut", "正向注解到 Ultiboard"], "v", "|", ["find", "查找范例"], ["help", "帮助"]];
const ZOOM_BAR: Item[] = [["zin", "放大"], ["zout", "缩小"], ["zarea", "缩放区域"], ["zfit", "缩放页面"], ["full", "全屏"]];
const PART_BAR: Item[] = [["gnd", "源"], ["res", "基本"], ["diode", "二极管"], ["bjt", "晶体管"], ["opamp", "模拟"], ["ttl", "TTL"], ["cmos", "CMOS"], ["dig", "其他数字"], ["mixed", "混合"],
  ["ind", "指示器"], ["pwr", "功率元器件"], ["misc", "其他"], ["adv", "高级外设"], ["rf", "射频"], ["motor", "机电"], ["ni", "NI 元器件"], ["conn", "连接器"], "|", ["mcu", "MCU"], "|", ["hblock", "层次块"], ["bus", "总线"]];
const SIM_BAR: Item[] = [["play", "运行"], ["pause", "暂停", "off"], ["stop", "停止", "pressed"]];
const PROBE_BAR: Item[] = [["pV", "电压"], ["pA", "电流"], ["pW", "功率"], ["pVV", "差分电压"], ["pAV", "电压和电流"], ["pRef", "电压参考"], ["pDig", "数字"], ["gear", "探针设置"]];
const MENUS = [["文件(", "F"], ["编辑(", "E"], ["视图(", "V"], ["绘制(", "P"], ["仿真(", "S"], ["转移 (", "n"], ["工具(", "T"], ["报告(", "R"], ["选项(", "O"], ["窗口(", "W"], ["帮助(", "H"]];

@customElement("app-root")
class AppRoot extends LitElement {
  @state() private sheetTab = 1;
  @state() private outTab = 4;

  static styles = css`
    :host { display: block; }
    * { box-sizing: border-box; }
    button { font: inherit; color: inherit; background: none; border: 0; padding: 0; margin: 0; }
    svg { display: block; }
    .app { height: 100vh; display: flex; flex-direction: column; background: #f0f0f0; color: #000; font: 18px/24px ${UI_FONT}; overflow: hidden; }
    .title { flex: none; height: 35px; display: flex; align-items: center; gap: 9px; padding: 0 2px 1px; background: #f3f3f3; border-bottom: 1px solid #a0a0a0; }
    .title h1 { flex: 1; margin: 0; font: inherit; }
    .wins { display: flex; }
    .wins button { width: 70px; height: 34px; display: grid; place-items: center; }
    .menu { flex: none; height: 36px; display: flex; align-items: center; gap: 13px; padding: 0 2px 2px 3px; border-bottom: 1px solid #a0a0a0; }
    .menu > svg { margin-right: -5px; }
    .menu u { text-underline-offset: 3px; text-decoration-thickness: 1px; }
    .kids { margin-left: auto; display: flex; gap: 8px; padding-right: 2px; }
    .kids button { width: 19px; height: 20px; display: grid; place-items: center; }
    .bar { flex: none; height: 38px; display: flex; }
    .bar.one { padding-left: 35px; }
    .bar.two { padding-left: 74px; }
    .group { display: flex; align-items: center; height: 38px; padding: 0 2px 1px 10px; border: 1px solid; border-color: #fff #a0a0a0 #a0a0a0 #fff; }
    .group.tight { padding-right: 1px; }
    .group.sim { width: 334px; margin: 0 10px 0 5px; }
    .group.zoom { margin-left: 613px; padding-left: 8px; }
    .sep { width: 8px; height: 30px; display: flex; justify-content: center; }
    .sep::before { content: ""; width: 2px; background: #a0a0a0; border-right: 1px solid #fff; }
    .drop { width: 17px; height: 30px; display: grid; place-items: center; }
    .combo { display: grid; width: 222px; height: 32px; margin-left: 5px; }
    .combo > * { grid-area: 1 / 1; }
    .combo svg { justify-self: end; align-self: center; margin-right: 6px; pointer-events: none; }
    select { appearance: none; font: inherit; color: #000; background: #fdfdfd; border: 1px solid #d0d0d0; border-radius: 2px; padding: 0 4px; }
    .mode { display: flex; align-items: center; font: 18px/24px "Open Sans", "Noto Sans", sans-serif; }
    .main { flex: 1; min-height: 0; display: grid; grid-template-columns: 197px minmax(0, 1fr) 36px; }

    .side { display: flex; flex-direction: column; min-height: 0; margin-bottom: 4px; padding: 3px 8px 3px 3px; border-top: 1px solid #a0a0a0; border-bottom: 1px solid #a0a0a0; }
    .cap { display: flex; align-items: center; gap: 2px; height: 29px; }
    .cap h2 { flex: 1; align-self: stretch; margin: 0 1px 0 0; padding-left: 3px; font: inherit; background: linear-gradient(90deg, #bccbdb, #d6e4f2); }
    .mini { flex: none; width: 20px; height: 19px; display: grid; place-items: center; border: 1px solid; border-color: #fff #696969 #696969 #fff; box-shadow: inset -1px -1px #a0a0a0; }
    .box { flex: 1; min-height: 0; display: flex; flex-direction: column; margin-top: 4px; border: 1px solid; border-color: #fff #696969 #696969 #fff; padding: 0 1px; width: 184px; }
    .sidebar { display: flex; align-items: center; gap: 10px; height: 34px; padding: 2px 3px 0 4px; }
    .sidebar button { width: 24px; height: 24px; }
    .sidebar i { width: 3px; height: 1px; background: #a0a0a0; margin-right: -5px; }
    .tree { flex: 1; border: 1px solid #828790; background: #fff; margin: 0; padding: 1px 0; list-style: none; }
    .tree ul { list-style: none; margin: 0; padding: 0; }
    .node { display: flex; align-items: center; height: 26px; }
    .node button { height: 26px; padding: 0 4px 0 2px; margin-left: 2px; }
    .node .sel { background: #f0f0f0; }
    .sidetabs { display: flex; align-items: flex-start; width: 184px; height: 28px; font-size: 16px; line-height: 22px; }
    .sidetabs .tab { height: 24px; margin-top: 1px; padding: 0 4px; }
    .tab { border: 1px solid; border-color: #696969 #696969 #696969 #fff; box-shadow: inset -1px -1px #c0c0c0; white-space: nowrap; }
    .sidetabs .tab.on { height: 27px; margin-top: 0; width: 55px; text-align: left; padding: 2px 5px 0; border-top: 0; }
    .sidetabs .tab.cut { padding: 0 3px 0 2px; border-right: 0; }
    .arrows { flex: none; display: flex; margin: 5px 0 0 auto; height: 22px; border: 1px solid #d8d8d8; background: #fbfbfb; }
    .arrows button { width: 21px; display: grid; place-items: center; }

    .mid { display: flex; flex-direction: column; min-width: 0; min-height: 0; border-left: 1px solid #696969; }
    .mdi { flex: 1; min-height: 0; display: flex; padding: 4px 4px 6px; border: solid #696969; border-width: 1px 1px 1px 0; }
    .view { flex: 1; min-width: 0; display: flex; border: solid; border-width: 2px 1px 1px 2px; border-color: #696969 #fff #fff #696969; }
    .canvas { flex: 1; min-width: 0; overflow: hidden; display: flex; justify-content: center; background: #ababab; }
    .scroll { flex: none; width: 26px; display: flex; flex-direction: column; align-items: center; border-left: 1px solid #fff; background: #f0f0f0; }
    .thumb { width: 5px; border-radius: 3px; background: #858585; }
    .scroll .thumb { margin-top: 29px; height: 79%; }
    .sheets { flex: none; display: flex; align-items: flex-start; height: 35px; padding: 0 3px 0 4px; gap: 3px; border-bottom: 1px solid #696969; }
    .sheets .doc { display: flex; align-items: center; gap: 3px; height: 28px; padding: 0 2px; border: solid #000; border-width: 0 2px 2px 1px; border-radius: 0 0 4px 4px; }
    .sheets .doc.on { height: 31px; }
    .sheets .cas { margin: 6px 0 0 auto; width: 21px; height: 20px; border: 1px solid; border-color: #fff #696969 #696969 #fff; }

    .inst { display: flex; flex-direction: column; align-items: center; padding: 12px 2px 0 0; border-top: 1px solid #696969; margin-bottom: 4px; border-bottom: 1px solid #a0a0a0; }
    .inst button { height: 32px; width: 34px; display: grid; place-items: center; }
    .inst button.low { height: 14px; }
    .inst hr { width: 34px; margin: 3px 0 5px; border: 0; border-top: 1px solid #a0a0a0; border-bottom: 1px solid #fff; }

    .out { flex: none; height: 179px; display: grid; grid-template-columns: 36px minmax(0, 1fr); }
    .rail { display: flex; flex-direction: column; align-items: center; gap: 3px; padding: 3px 5px 5px 2px; }
    .rail h2 { flex: 1; width: 29px; margin: 0; font: 18px/28px ${UI_FONT}; color: #3b4654; writing-mode: vertical-rl; transform: rotate(180deg); padding-top: 6px; background: linear-gradient(0deg, #d6e4f2, #bccbdb); white-space: nowrap; }
    .pane { display: flex; flex-direction: column; min-width: 0; padding: 5px 4px 0 0; }
    .edge { height: 142px; display: flex; border: solid; border-width: 1px 2px 2px 1px; border-color: #fff #696969 #696969 #fff; padding: 1px 4px 3px 0; }
    .log { flex: 1; min-width: 0; display: flex; background: #fff; border: 1px solid #828790; padding: 1px; }
    .lines { flex: 1; min-width: 0; overflow: hidden; padding: 1px 7px; font: 18px/28px "Open Sans", "Noto Sans CJK SC", sans-serif; white-space: nowrap; }
    .lines p { margin: 0; height: 28px; }
    .lines a { color: #0066cc; }
    .log .track { width: 26px; background: #f0f0f0; display: flex; justify-content: center; padding-top: 26px; }
    .log .thumb { height: 63px; }
    .outtabs { display: flex; gap: 2px; padding-left: 1px; font-size: 16px; line-height: 22px; }
    .outtabs .tab { height: 25px; padding: 0 5px 0 4px; text-align: left; border-top-color: #f0f0f0; }
    .outtabs .two { width: 52px; }
    .outtabs .tab.on { height: 27px; width: 55px; padding-top: 2px; }

    .status { flex: none; height: 27px; display: flex; align-items: center; border-top: 1px solid #a0a0a0; box-shadow: inset 0 1px #fff; padding: 0 4px 0 1px; }
    .status > span { height: 22px; line-height: 22px; }
    .status .msg { flex: 1; }
    .status .dash { width: 38px; border-right: 1px solid #d0d0d0; }
    .status .gap { width: 123px; border-right: 1px solid #d0d0d0; }
    .status .pass { width: 123px; padding-left: 4px; border-right: 1px solid #d0d0d0; white-space: nowrap; }
    .cells { display: flex; gap: 2px; padding-left: 5px; }
    .cells i { width: 6px; height: 13px; border: 1px solid; border-color: #a0a0a0 #fff #fff #a0a0a0; background: #e4e4e4; margin-top: 5px; }
    .strip { flex: none; height: 11px; background: #1c1c1c; border-top: 2px solid #3a3a3a; }
  `;

  private items(list: Item[]): TemplateResult[] {
    return list.map((it) =>
      it === "|" ? html`<span class="sep"></span>`
      : it === "v" ? html`<button class="drop" aria-label="更多"><svg width="6" height="3" viewBox="0 0 6 3"><path d="M0 0H6L3 3Z"></path></svg></button>`
      : html`<tool-button icon=${it[0]} label=${it[1]} ?pressed=${it[2] === "pressed"} ?off=${it[2] === "off"}></tool-button>`);
  }
  private tri(d: string, c = "#000") {
    return html`<svg width="10" height="10" viewBox="0 0 10 10" aria-hidden="true"><path d=${d} fill=${c}></path></svg>`;
  }
  private cross() {
    return html`<svg width="10" height="10" viewBox="0 0 10 10" aria-hidden="true"><path d="M1 1L9 9M9 1L1 9" stroke="#000" stroke-width="3"></path></svg>`;
  }
  private project(more: boolean, selected: boolean) {
    return html`<li>
      <div class="node">
        <svg width="33" height="26" aria-hidden="true"><g fill="none" stroke="#808080" stroke-dasharray="1 1">
          <path d="M24 13.5H33"></path>${more ? svg`<path d="M16.5 20V26"></path>` : svg`<path d="M16.5 0V6"></path>`}</g>
          <rect x="10.5" y="7.5" width="12" height="12" rx="1" fill="#f4f4f4" stroke="#909090"></rect><path d="M13 13.5H20" stroke="#3050a0"></path></svg>
        ${glyph(ICONS.clip, 23)}<button>设计1</button>
      </div>
      <ul><li class="node">
        <svg width="57" height="26" aria-hidden="true"><g fill="none" stroke="#808080" stroke-dasharray="1 1">
          <path d="M43.5 0V14M44 13.5H57"></path>${more ? svg`<path d="M16.5 0V26"></path>` : nothing}</g></svg>
        ${glyph(ICONS.doc, 26)}<button class=${classMap({ sel: selected })}>设计1</button>
      </li></ul>
    </li>`;
  }

  render() {
    const sheets = ["设计1", "设计1 *"];
    const outs = ["结果", "网络", "元器件", "敷铜层", "仿真"];
    return html`<div class="app">
      <header class="title">${glyph(ICONS.app)}<h1>设计1 - Multisim - [设计1 *]</h1>
        <div class="wins">
          <button aria-label="最小化"><svg width="14" height="14"><path d="M0 7.5H14" stroke="#000"></path></svg></button>
          <button aria-label="还原"><svg width="16" height="16" fill="none" stroke="#000"><rect x="1.5" y="4.5" width="10" height="10" rx="2"></rect><path d="M4 4V3Q4 1.500 6 1.500H12Q14.500 1.500 14.500 4V10Q14.500 12 12 12"></path></svg></button>
          <button aria-label="关闭"><svg width="16" height="16"><path d="M1 1L15 15M15 1L1 15" stroke="#000"></path></svg></button>
        </div></header>
      <nav class="menu">${glyph(ICONS.doc, 26)}
        ${MENUS.map(([a, k]) => html`<button>${a}<u>${k}</u>)</button>`)}
        <div class="kids">
          <button aria-label="最小化文档"><svg width="14" height="14"><path d="M1 12H11" stroke="#000" stroke-width="3"></path></svg></button>
          <button aria-label="还原文档"><svg width="16" height="16" fill="none" stroke="#000" shape-rendering="crispEdges"><path d="M5 6V2H15V10H11M5 2H15M1 7H11V15H1Z"></path><path d="M5 2H15M1 8H11" stroke-width="3"></path></svg></button>
          <button aria-label="关闭文档"><svg width="14" height="14"><path d="M1 2L12 12M12 2L1 12" stroke="#000" stroke-width="3"></path></svg></button>
        </div></nav>

      <div class="bar one">
        <div class="group tight">${this.items(FILE_BAR)}</div>
        <div class="group">${this.items(VIEW_BAR)}
          <div class="combo"><select aria-label="在用列表"><option>--- 在用列表 ---</option></select>
            <svg width="14" height="10" fill="none" stroke="#606060"><path d="M1 2L7 8L13 2"></path></svg></div>
          ${this.items(AFTER_BAR)}</div>
        <div class="group zoom">${this.items(ZOOM_BAR)}</div>
      </div>
      <div class="bar two">
        <div class="group">${this.items(PART_BAR)}</div>
        <div class="group sim">${this.items(SIM_BAR)}<button class="mode">${glyph(ICONS.wrench, 19)}Interactive</button></div>
        <div class="group">${this.items(PROBE_BAR)}</div>
      </div>

      <div class="main">
        <aside class="side">
          <div class="cap"><h2>设计工具箱</h2>
            <button class="mini" aria-label="收起">${this.tri("M1 7H9L5 3Z", "#a0a0a0")}</button>
            <button class="mini" aria-label="关闭工具箱">${this.cross()}</button></div>
          <div class="box">
            <div class="sidebar">
              ${[["newDoc", "新建设计"], ["open", "打开设计"], ["save", "保存设计"], ["report", "关闭设计"]].map(([i, l]) => html`<button aria-label=${l}>${glyph(ICONS[i])}</button>`)}
              <i></i><button aria-label="版本">${glyph(ICONS.history)}</button>
            </div>
            <ul class="tree">${this.project(true, false)}${this.project(false, true)}</ul>
          </div>
          <div class="sidetabs">
            <button class="tab on">层级</button><button class="tab">可见度</button><button class="tab cut">项</button>
            <div class="arrows"><button aria-label="向左">${this.tri("M7 1V9L3 5Z")}</button><button aria-label="向右">${this.tri("M3 1V9L7 5Z")}</button></div>
          </div>
        </aside>

        <section class="mid">
          <div class="mdi"><div class="view">
            <div class="canvas"><schematic-sheet></schematic-sheet></div>
            <div class="scroll"><div class="thumb"></div></div>
          </div></div>
          <div class="sheets">
            ${sheets.map((n, i) => html`<button class=${classMap({ doc: true, on: this.sheetTab === i })} @click=${() => (this.sheetTab = i)}>${glyph(ICONS.doc, 25)}${n}</button>`)}
            <button class="cas" aria-label="层叠窗口">${glyph(ICONS.cascade, 18)}</button>
          </div>
        </section>

        <div class="inst">
          ${INSTR.map(([l, g]) => html`<button aria-label=${l}>${glyph(g)}</button>`)}
          <hr><button aria-label="NI 仪器">${glyph(ICONS.niInst)}</button><button class="low" aria-label="更多 NI 仪器">${this.tri("M3 1V9L8 5Z")}</button>
          <hr><button aria-label="LabVIEW 仪器">${glyph(ICONS.lvInst)}</button><button class="low" aria-label="更多 LabVIEW 仪器">${this.tri("M3 1V9L8 5Z", "#a0a0a0")}</button>
          <hr><button aria-label="电流夹">${glyph(ICONS.clamp)}</button>
        </div>
      </div>

      <section class="out">
        <div class="rail">
          <button class="mini" aria-label="关闭视图">${this.cross()}</button>
          <button class="mini" aria-label="展开视图">${this.tri("M3 1V9L7 5Z", "#a0a0a0")}</button>
          <h2>电子表格视图</h2>
        </div>
        <div class="pane">
          <div class="edge"><div class="log">
            <div class="lines">
              <p>------ 正在为 设计1 - 2025年4月1日, 21:52:10 检查 SPICE 网表------</p>
              <p>======= SPICE 网表检查完毕, 0 错误, 0 警告 =======</p>
              <p>Error: Unable to converge during transient analysis. Consider increasing the ABSTOL, VNTOL, and RELTOL options.</p>
              <p>Simulation canceled</p>
              <p>See <a href="#help">convergence help</a> for more information</p>
            </div>
            <div class="track"><div class="thumb"></div></div>
          </div></div>
          <div class="outtabs">${outs.map((n, i) => html`<button class=${classMap({ tab: true, two: n.length === 2, on: this.outTab === i })} @click=${() => (this.outTab = i)}>${n}</button>`)}</div>
        </div>
      </section>

      <footer class="status"><span class="msg">如需帮助，,请按 F1</span><span class="dash">-</span><span class="gap"></span><span class="pass">传递: 0.000 s</span>
        <span class="cells">${[0, 1, 2, 3, 4, 5, 6].map(() => html`<i></i>`)}</span></footer>
      <div class="strip"></div>
    </div>`;
  }
}
